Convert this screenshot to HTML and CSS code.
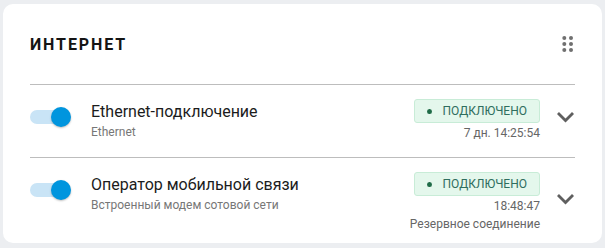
FILE: index.html
```html
<!DOCTYPE html>
<html lang="ru">
<head>
<meta charset="utf-8">
<title>Интернет</title>
<link rel="stylesheet" href="styles.css">
</head>
<body>
<section class="card">
  <header class="card-header">
    <h2 class="card-title">Интернет</h2>
    <svg class="drag" width="12" height="16" viewBox="0 0 12 16" aria-hidden="true">
      <circle cx="2.3" cy="2" r="2"/><circle cx="9" cy="2" r="2"/>
      <circle cx="2.3" cy="8" r="2"/><circle cx="9" cy="8" r="2"/>
      <circle cx="2.3" cy="14" r="2"/><circle cx="9" cy="14" r="2"/>
    </svg>
  </header>

  <div class="row">
    <div class="row-main">
      <span class="switch"><span class="switch-track"></span><span class="switch-thumb"></span></span>
      <div class="row-text">
        <div class="row-title">Ethernet-подключение</div>
        <div class="row-sub">Ethernet</div>
      </div>
    </div>
    <div class="status">
      <span class="badge"><span class="badge-dot"></span>Подключено</span>
      <span class="status-time">7 дн. 14:25:54</span>
    </div>
    <svg class="chevron" width="17" height="10.5" viewBox="6 8.59 12 7.41" aria-hidden="true"><path d="M16.59 8.59L12 13.17 7.41 8.59 6 10l6 6 6-6z"/></svg>
  </div>

  <div class="row row-last">
    <div class="row-main">
      <span class="switch"><span class="switch-track"></span><span class="switch-thumb"></span></span>
      <div class="row-text">
        <div class="row-title">Оператор мобильной связи</div>
        <div class="row-sub">Встроенный модем сотовой сети</div>
      </div>
    </div>
    <div class="status">
      <span class="badge"><span class="badge-dot"></span>Подключено</span>
      <span class="status-time">18:48:47</span>
      <span class="status-note">Резервное соединение</span>
    </div>
    <svg class="chevron" width="17" height="10.5" viewBox="6 8.59 12 7.41" aria-hidden="true"><path d="M16.59 8.59L12 13.17 7.41 8.59 6 10l6 6 6-6z"/></svg>
  </div>
</section>
</body>
</html>
```
FILE: styles.css
```css
* { box-sizing: border-box; }

body {
  margin: 0;
  background: #eceef1;
  font-family: Roboto, "Liberation Sans", Arial, sans-serif;
}

.card {
  margin: 4px 3px;
  width: 599px;
  height: 239px;
  background: #fff;
  border-radius: 10px;
  padding: 0 27px;
}

.card-header {
  height: 81px;
  display: flex;
  align-items: center;
  justify-content: space-between;
  border-bottom: 1px solid #bdbdbd;
}

.card-title {
  margin: 0;
  font-size: 16px;
  font-weight: 700;
  letter-spacing: 1.9px;
  text-transform: uppercase;
  color: #141414;
  line-height: 20px;
  padding-top: 1px;
}

.drag {
  fill: #707070;
  margin-right: 1px;
}

.row {
  display: flex;
  align-items: center;
  padding: 14px 0 16px;
  border-bottom: 1px solid #bdbdbd;
}

.row-last {
  border-bottom: none;
  padding-bottom: 10px;
}

.row-main {
  display: flex;
  align-self: flex-start;
  margin-top: 3px;
  flex: 1;
}

.switch {
  position: relative;
  width: 41px;
  height: 20px;
  margin-top: 5px;
  flex: none;
}

.switch-track {
  position: absolute;
  left: 0;
  top: 3px;
  width: 34px;
  height: 14px;
  border-radius: 7px;
  background: #c9e4f6;
}

.switch-thumb {
  position: absolute;
  left: 21px;
  top: 0;
  width: 20px;
  height: 20px;
  border-radius: 50%;
  background: #0095de;
  box-shadow: 0 1px 2px rgba(0, 0, 0, 0.25);
}

.row-text {
  margin-left: 20px;
}

.row-title {
  font-size: 16px;
  line-height: 20px;
  color: #1c1c1c;
}

.row-sub {
  margin-top: 2px;
  font-size: 12px;
  line-height: 16px;
  color: #777;
}

.status {
  display: flex;
  flex-direction: column;
  align-items: flex-end;
}

.badge {
  display: flex;
  align-items: center;
  height: 24px;
  width: 126px;
  padding: 0 12px;
  border: 1px solid #c8ecd7;
  border-radius: 3px;
  background: #e4f7ec;
  color: #2f6e5e;
  font-size: 12px;
  text-transform: uppercase;
}

.badge-dot {
  width: 5px;
  height: 5px;
  border-radius: 50%;
  background: #1f6b47;
  margin-right: 11px;
}

.status-time,
.status-note {
  font-size: 12px;
  line-height: 16px;
  color: #666;
}

.status-time { margin-top: 2px; }
.status-note { margin-top: 2px; }

.chevron {
  fill: #5f5f5f;
  margin: 0 1px 5px 17px;
  flex: none;
}
```
